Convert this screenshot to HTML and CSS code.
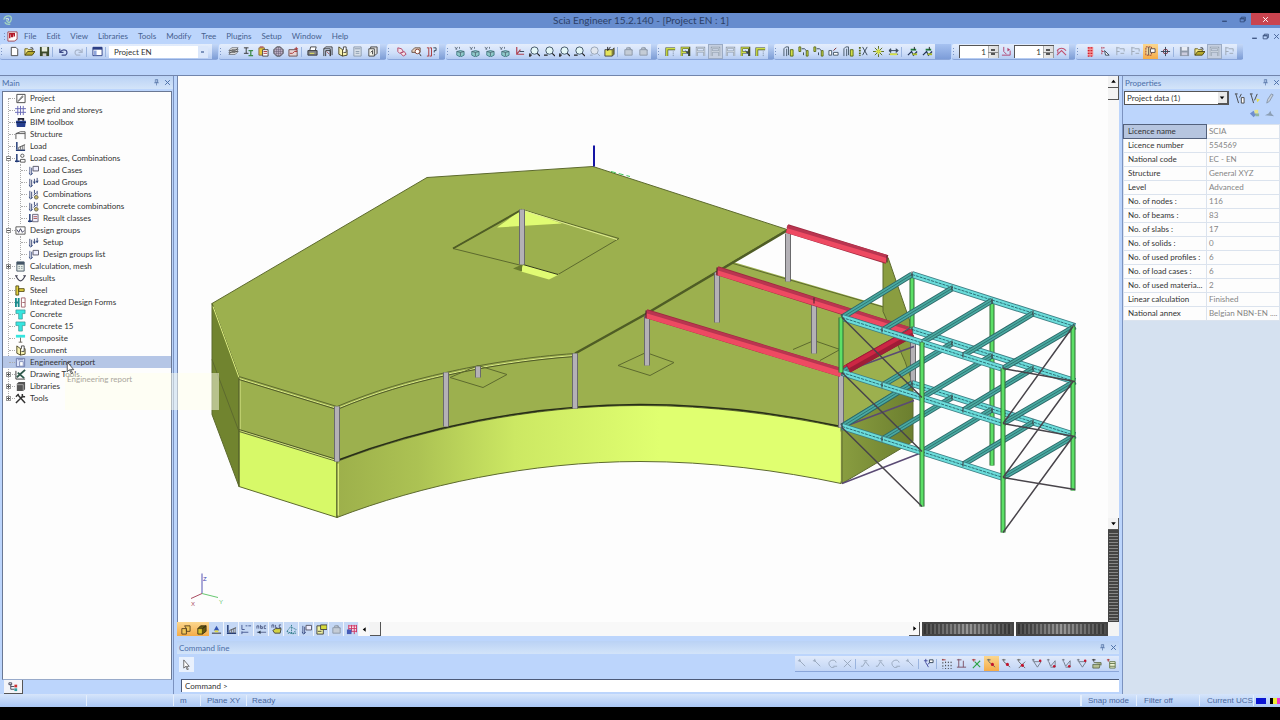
FILE: index.html
```html
<!DOCTYPE html>
<html lang="en">
<head>
<meta charset="utf-8">
<title>Scia Engineer 15.2.140 - [Project EN : 1]</title>
<link rel="stylesheet" href="styles.css">
</head>
<body>
<svg class="defs" aria-hidden="true">
  <symbol id="new" viewBox="0 0 12 12"><path d="M2.5 1.5h5l2 2v7h-7z" fill="#fff" stroke="#444"/></symbol>
  <symbol id="open" viewBox="0 0 12 12"><path d="M1 10V3h3l1 1h4v2" fill="#f5e98a" stroke="#6b6320"/><path d="M1 10l3-4h8l-3 4z" fill="#b5a829" stroke="#4d4818"/><path d="M7 2q3-1 3 2" fill="none" stroke="#333"/></symbol>
  <symbol id="save" viewBox="0 0 12 12"><path d="M1 1h10v10H1z" fill="#3c4a2a"/><path d="M3 1h6v5H3z" fill="#e8eddf"/><path d="M4 8h4v3H4z" fill="#ccc"/></symbol>
  <symbol id="saveg" viewBox="0 0 12 12"><path d="M1 1h10v10H1z" fill="#8e98a8"/><path d="M3 1h6v4H3z" fill="#e8edf5"/><path d="M3 7h6v3H3z" fill="#ccd"/></symbol>
  <symbol id="undo" viewBox="0 0 12 12"><path d="M2 3v4h4M2 7q3-4 7-2 2 3-1 5H4" fill="none" stroke="#3d4a88" stroke-width="1.3"/></symbol>
  <symbol id="redo" viewBox="0 0 12 12"><path d="M10 3v4H6M10 7q-3-4-7-2-2 3 1 5h4" fill="none" stroke="#a9b6cc" stroke-width="1.3"/></symbol>
  <symbol id="win" viewBox="0 0 12 12"><path d="M1 1.500h10v9H1z" fill="#fff" stroke="#2c3f86"/><path d="M1 1h10v3H1z" fill="#2c3f86"/><path d="M2 5h3v5H2z" fill="#8fa5dc"/></symbol>
  <symbol id="layers" viewBox="0 0 12 12"><path d="M1 9l3-3h7l-3 3zM1 7l3-3h7L8 7zM1 5l3-3h7L8 5z" fill="#fff" stroke="#444" stroke-width=".8"/></symbol>
  <symbol id="ibeam" viewBox="0 0 12 12"><path d="M1 2h5M3.500 2v6M1 8h5" stroke="#333" fill="none"/><path d="M6 5h5M8.500 5v5M6 10.500h5" stroke="#3f8a4a" stroke-width="1.400" fill="none"/></symbol>
  <symbol id="paste" viewBox="0 0 12 12"><path d="M1 2h6v8H1z" fill="#e4c838" stroke="#864"/><path d="M5 4h6v7H5z" fill="#fff" stroke="#444"/><path d="M6 6h4M6 8h4M2 1h4" stroke="#a33"/></symbol>
  <symbol id="mesh" viewBox="0 0 12 12"><path d="M4 1h4l3 3v4l-3 3H4L1 8V4z" fill="#c9bcd0" stroke="#333"/><path d="M4 1v10M6 1v10M8 1v10M1 4h10M1 6h10M1 8h10" stroke="#635a70" stroke-width=".6"/></symbol>
  <symbol id="picred" viewBox="0 0 12 12"><path d="M1 4h9v7H1z" fill="#e7d3d3" stroke="#6a5050"/><path d="M2 8h3l2-2h3M9 1v4M7 3h4" stroke="#a33" fill="none"/></symbol>
  <symbol id="print" viewBox="0 0 12 12"><path d="M3 5l1-4h6L9 5" fill="#fff" stroke="#444"/><path d="M1 5h10v5H1z" fill="#85858a" stroke="#333"/><path d="M3 8h5" stroke="#ee5"/></symbol>
  <symbol id="gate" viewBox="0 0 12 12"><path d="M2 11V3l2-2h7v9M4 11V5h5v6M2 3h7v8" fill="none" stroke="#333"/><path d="M5 6l3 3" stroke="#a55"/></symbol>
  <symbol id="book" viewBox="0 0 12 12"><path d="M6 4L2 1v8l4 2 5-1V4zV11" fill="#f7f2b0" stroke="#4b4520"/><path d="M7 4V1h3v6H7" fill="#fff" stroke="#444"/></symbol>
  <symbol id="calc" viewBox="0 0 12 12"><path d="M2 1h8v10H2z" fill="#e8efe8" stroke="#456"/><path d="M2 1h8v3H2z" fill="#456"/><path d="M4 6h1M7 6h1M4 8h1M7 8h1" stroke="#456"/></symbol>
  <symbol id="calcg" viewBox="0 0 12 12"><path d="M2 1h8v10H2z" fill="#d8e0e8" stroke="#8b9aae"/><path d="M3 3h6M4 6h4M4 8h4" stroke="#8b9aae"/></symbol>
  <symbol id="pages" viewBox="0 0 12 12"><path d="M4 1h7v7l-2 2H4z" fill="#ddd" stroke="#444"/><path d="M2 3h6v8H2z" fill="#f5f5ec" stroke="#444"/><path d="M4 7l2-2v4" stroke="#444" fill="none"/></symbol>
  <symbol id="lasso" viewBox="0 0 12 12"><path d="M2 2l4 1 2 3-4 2-2-2zM5 8l3 3 3-2-2-3z" fill="#f3e3ea" stroke="#b04468"/></symbol>
  <symbol id="lens" viewBox="0 0 12 12"><path d="M1 5l3-3h6v5H1z" fill="#e2cfbd" stroke="#6b5548"/><circle cx="7" cy="6" r="2.500" fill="#fff" stroke="#843"/><path d="M9 8l2 3" stroke="#333"/></symbol>
  <symbol id="colq" viewBox="0 0 12 12"><path d="M1 2h2v9H1M4 2h2v9H4" fill="none" stroke="#a33"/><path d="M8 2h3v3H9v2M9 9v1" fill="none" stroke="#345"/></symbol>
  <symbol id="cube" viewBox="0 0 12 12"><path d="M3 6l4-1 4 1v4l-4 2-4-2z" fill="#8fc9c9" stroke="#2d6b73" stroke-width=".8"/><path d="M3 6l4 1v4M7 7l4-1M1 1l2 3M4 1L2 4M6 1v2" fill="none" stroke="#456" stroke-width=".8"/></symbol>
  <symbol id="axis" viewBox="0 0 12 12"><path d="M3 1v8h8M3 9l4-5" stroke="#b04050" fill="none" stroke-width="1.300"/><path d="M6 6h5" stroke="#345"/></symbol>
  <symbol id="zin" viewBox="0 0 12 12"><circle cx="6" cy="5" r="4" fill="#e4f7f7" stroke="#3b5060"/><path d="M9 8l3 3M1 8v4M0 10h3" stroke="#222" stroke-width="1.300"/></symbol>
  <symbol id="zout" viewBox="0 0 12 12"><circle cx="6" cy="5" r="4" fill="#e4f7f7" stroke="#3b5060"/><path d="M9 8l3 3M0 10h4" stroke="#222" stroke-width="1.300"/></symbol>
  <symbol id="zg" viewBox="0 0 12 12"><circle cx="6" cy="5" r="4" fill="#e0e6ee" stroke="#95a2b4"/><path d="M9 8l3 3M1 10h3" stroke="#95a2b4"/></symbol>
  <symbol id="box" viewBox="0 0 12 12"><path d="M1 4h8v7H1z" fill="#e4e35c" stroke="#444"/><path d="M9 4l2-2v7l-2 2" fill="#8a8a28" stroke="#444"/><path d="M4 1v4M7 1L4 5" stroke="#222"/></symbol>
  <symbol id="handg" viewBox="0 0 12 12"><path d="M2 4h8v6H2zM4 4V2h4v2M6 1l4 4" fill="#c4ccd6" stroke="#8c98a8"/></symbol>
  <symbol id="frame" viewBox="0 0 12 12"><path d="M2 11V3h9" fill="none" stroke="#404a28" stroke-width="3"/><path d="M2 11V3h9" fill="none" stroke="#cfdf45" stroke-width="1.600"/><path d="M9 6v5" stroke="#789" stroke-dasharray="1 1"/></symbol>
  <symbol id="frame2" viewBox="0 0 12 12"><path d="M2 11V2h8v9M2 7h8" fill="none" stroke="#404a28" stroke-width="2.400"/><path d="M2 11V2h8M2 7h5" fill="none" stroke="#d2e048" stroke-width="1.400"/><path d="M6 5l4 5" stroke="#347"/></symbol>
  <symbol id="frameg" viewBox="0 0 12 12"><path d="M2 11V2h8v9M2 6h8" fill="none" stroke="#8c99a9" stroke-width="2.200"/><path d="M2 11V2h8v9M2 6h8" fill="none" stroke="#dbe3ec" stroke-width=".8"/></symbol>
  <symbol id="cols" viewBox="0 0 12 12"><path d="M1 11V3l2-2h3v9M4 3v8" fill="none" stroke="#456"/><path d="M8 4h3v7H8z" fill="#d5e047" stroke="#56681b"/></symbol>
  <symbol id="move" viewBox="0 0 12 12"><path d="M1 1h2v5H1z" fill="#d5e047" stroke="#56681b"/><path d="M9 5h2v6H9z" fill="#d5e047" stroke="#56681b"/><path d="M4 3h3l2 2M6 7v3" stroke="#345" fill="none"/></symbol>
  <symbol id="scale" viewBox="0 0 12 12"><path d="M1 5h3v5H1zM6 7h5v3H6z" fill="#fff" stroke="#456"/><path d="M6 5l3-3" stroke="#722"/></symbol>
  <symbol id="scis" viewBox="0 0 12 12"><path d="M2 1v10" stroke="#56681b" stroke-width="2" stroke-dasharray="2 1"/><path d="M5 1l5 9M10 1L5 10" stroke="#345"/></symbol>
  <symbol id="star" viewBox="0 0 12 12"><path d="M6 0v12M0 6h12M2 2l8 8M10 2l-8 8" stroke="#56681b"/><path d="M6 3v6M3 6h6" stroke="#d5e047" stroke-width="2"/></symbol>
  <symbol id="stretch" viewBox="0 0 12 12"><path d="M1 9h10M3 5h6M1 5l2-2v4zM11 5L9 3v4z" stroke="#345" fill="#345"/><path d="M2 8h8v2H2z" fill="#d5e047"/></symbol>
  <symbol id="tools2" viewBox="0 0 12 12"><path d="M1 10l4-4 2 4 4-4" stroke="#235" fill="none" stroke-width="1.300"/><path d="M4 4h6" stroke="#237a3a" stroke-width="2"/><path d="M6 9h5" stroke="#aaba28" stroke-width="2"/><path d="M8 1v3" stroke="#222"/></symbol>
  <symbol id="wave" viewBox="0 0 12 12"><path d="M1 5q5-5 10 0M1 10l5-5 5 5M2 4v4" stroke="#c05070" fill="none" stroke-width="1.100"/></symbol>
  <symbol id="loadm" viewBox="0 0 12 12"><path d="M1 10h9V5M3 1v5l3 3" stroke="#b0406c" fill="none"/><path d="M7 2v4l3-2z" fill="#b0406c"/></symbol>
  <symbol id="bug" viewBox="0 0 12 12"><path d="M3 1h6v10H3z" fill="#f59696"/><path d="M3 2h6M3 5h6M3 8h6M3 11h6" stroke="#cf1f30" stroke-width="1.500" stroke-dasharray="2 1"/></symbol>
  <symbol id="rcur" viewBox="0 0 12 12"><path d="M2 1v9M5 2H2M2 6h3" stroke="#b03048" stroke-dasharray="2 1"/><path d="M5 5l5 5H6z" fill="#fff" stroke="#345"/></symbol>
  <symbol id="curg" viewBox="0 0 12 12"><path d="M2 1v9M5 2H2M2 6h3" stroke="#9ba6b4"/><path d="M5 3h5v3M6 8h4" stroke="#9ba6b4" fill="none"/></symbol>
  <symbol id="sel" viewBox="0 0 12 12"><path d="M1 1h6v9H1z" fill="#ecd9a0" stroke="#9a3328" stroke-dasharray="2 1"/><path d="M6 3h5v4H6zM4 1v9" fill="#fff" stroke="#5a4a48"/></symbol>
  <symbol id="target" viewBox="0 0 12 12"><circle cx="6" cy="6" r="2.500" fill="none" stroke="#8a3440"/><path d="M6 1v10M1 6h10" stroke="#345"/></symbol>
  <symbol id="project" viewBox="0 0 12 12"><path d="M2 1.500h9v9H2z" fill="#fff" stroke="#444"/><path d="M3 9l5-6 1 1-5 5z" fill="#999" stroke="#555" stroke-width=".6"/></symbol>
  <symbol id="grid" viewBox="0 0 12 12"><path d="M3 1v10M6 1v10M9 1v10M0 4h12M0 8h12" stroke="#6465b4"/></symbol>
  <symbol id="bim" viewBox="0 0 12 12"><path d="M1 4h11l-1 7H2z" fill="#243d8d"/><path d="M4 4V2h5v2" fill="none" stroke="#223" stroke-width="2"/><path d="M1 6h11" stroke="#112558"/></symbol>
  <symbol id="struct" viewBox="0 0 12 12"><path d="M1 11V5q5-3 10-2v8M1 5h10" fill="none" stroke="#555"/></symbol>
  <symbol id="load" viewBox="0 0 12 12"><path d="M2 1v8M1 10h10" stroke="#223a76" stroke-width="1.600"/><path d="M4 10V7M6 10V6M8 10V5M10 10V4" stroke="#777"/><path d="M4 7l7-3" stroke="#555"/></symbol>
  <symbol id="lcase" viewBox="0 0 12 12"><path d="M2 1v9M0 9h5" stroke="#223a76" stroke-width="1.600"/><circle cx="8" cy="3" r="1.800" fill="none" stroke="#555"/><path d="M6 7h5v3H6z" fill="none" stroke="#555"/></symbol>
  <symbol id="rclass" viewBox="0 0 12 12"><path d="M2 1v9M0 9h5" stroke="#223a76" stroke-width="1.600"/><path d="M5 1.500h6v8H5z" fill="#eef" stroke="#667"/><path d="M6 4h4M6 6h4" stroke="#a55"/></symbol>
  <symbol id="lc" viewBox="0 0 12 12"><path d="M2 2v8M4 3v7" stroke="#455487"/><path d="M5.500 1.500h6v5h-6z" fill="#eef" stroke="#556"/><path d="M1 9l2 2 2-2" fill="none" stroke="#223a76"/></symbol>
  <symbol id="lg" viewBox="0 0 12 12"><path d="M2 2v8M4 3v7M7 2v5M10 1v5" stroke="#354373"/><path d="M1 9l2 2 2-2M6 5l1 2 1-2M9 4l1 2 1-2" fill="none" stroke="#223a76"/></symbol>
  <symbol id="comb" viewBox="0 0 12 12"><path d="M2 2v8M4 3v7M7 1v4M10 2v4" stroke="#354373"/><path d="M1 9l2 2 2-2M6 7l3-3" fill="none" stroke="#223a76"/><circle cx="9" cy="9" r="2" fill="#c9b968" stroke="#665"/></symbol>
  <symbol id="dg" viewBox="0 0 12 12"><path d="M1 2h10v8H1z" fill="#fff" stroke="#555"/><path d="M2 5l2 3 2-4 2 4 2-2" fill="none" stroke="#335"/></symbol>
  <symbol id="results" viewBox="0 0 12 12"><path d="M1 3q5 11 10 0M0 3h3M9 3h3" fill="none" stroke="#445" stroke-width="1.300"/></symbol>
  <symbol id="steel" viewBox="0 0 12 12"><path d="M1 1h3v10H1zM4 4h6v3H4z" fill="#e3d23f" stroke="#554e18"/></symbol>
  <symbol id="idf" viewBox="0 0 12 12"><path d="M1 1v10M4 1v10M1 6h3" stroke="#178b8c" stroke-width="2"/><path d="M7 1h4v10H7zM8 6h3" fill="#fff" stroke="#a0606a"/></symbol>
  <symbol id="concrete" viewBox="0 0 12 12"><path d="M1 1h10v4H8v6H4V5H1z" fill="#36e5df" stroke="#318b8a" stroke-width=".7"/></symbol>
  <symbol id="compo" viewBox="0 0 12 12"><path d="M1 2h10v3H1z" fill="#36e5df"/><path d="M6 5v5M4 10h4" stroke="#68635a"/></symbol>
  <symbol id="report" viewBox="0 0 12 12"><path d="M1.500 1.500h9v9h-9z" fill="#dde5fa" stroke="#6876a8"/><path d="M5 5h4v5H5z" fill="#fff" stroke="#7f8cba"/><path d="M3 3h6" stroke="#6876a8"/></symbol>
  <symbol id="draw" viewBox="0 0 12 12"><path d="M1 2v9h10" stroke="#333" fill="none"/><path d="M2 9l9-8M3 4l7 6" stroke="#30594c" stroke-width="2"/></symbol>
  <symbol id="libs" viewBox="0 0 12 12"><path d="M2 3l2-2h7v8l-2 2H2z" fill="#555"/><path d="M2 4h7M9 4v7" stroke="#aaa"/></symbol>
  <symbol id="hammer" viewBox="0 0 12 12"><path d="M1 11l8-8M3 2l8 9" stroke="#333" stroke-width="1.600"/><path d="M1 4l3-3M8 1v3h3" stroke="#333" fill="none" stroke-width="1.600"/></symbol>
  <symbol id="cubey" viewBox="0 0 12 12"><path d="M2 5h5v6H2zM5 2h6v6H7V5z" fill="#f1c65a" stroke="#5c4521"/></symbol>
  <symbol id="cubed" viewBox="0 0 12 12"><path d="M2 5h5v6H2z" fill="#d6c32c" stroke="#3c3212"/><path d="M2 5l3-3h6L7 5M7 5l4-3v6l-4 3" fill="#655811" stroke="#3c3212"/></symbol>
  <symbol id="sup" viewBox="0 0 12 12"><path d="M6 2l3 5H3z" fill="#3556b0"/><path d="M1 10h10" stroke="#223"/><path d="M4 7h4v2H4z" fill="#e3dc45"/></symbol>
  <symbol id="lxx" viewBox="0 0 12 12"><path d="M1 1v5h3M5 2h2M8 2h3M1 9h7M1 8v3" stroke="#44578e" fill="none"/></symbol>
  <symbol id="abc" viewBox="0 0 12 12"><path d="M1 5V2h2v3M5 1v4h2V3H5M11 2H9v3h2M1 9h10" stroke="#35406c" fill="none" stroke-width=".8"/><path d="M5 7v4l-3-2z" fill="#234"/></symbol>
  <symbol id="abcy" viewBox="0 0 12 12"><path d="M1 4V1h2v3M5 1v3h2M11 1H9v3h2" stroke="#35406c" fill="none" stroke-width=".8"/><path d="M2 7l3-2h6l-1 5H4z" fill="#d3d243" stroke="#444"/></symbol>
  <symbol id="dotted" viewBox="0 0 12 12"><path d="M1 8l4-5 6 3-3 5z" fill="none" stroke="#2b7886" stroke-dasharray="1.500 1"/><path d="M6 1v9M2 10h9" stroke="#2b7886" stroke-dasharray="1.500 1"/></symbol>
  <symbol id="winy" viewBox="0 0 12 12"><path d="M1 2h7v9H1z" fill="#eef0a0" stroke="#444"/><path d="M5 1h7v5H5z" fill="#d6da3c" stroke="#444"/><path d="M2 8h4" stroke="#444"/></symbol>
  <symbol id="rgrid" viewBox="0 0 12 12"><path d="M3 1h9v8H3z" fill="#fbe1ea"/><path d="M3 1v8M6 1v8M9 1v10M11.500 1v8M3 2h9M3 5h9M3 8h9" stroke="#c93564"/><path d="M1 6h5v5H1z" fill="#455bb7"/></symbol>
  <symbol id="tree" viewBox="0 0 12 12"><path d="M1 2h3v2H1zM3 4v5h4M3 6h4" fill="none" stroke="#445"/><path d="M7 4h3v3H7z" fill="#c33"/><path d="M7 8h3v3H7z" fill="#2a9fa0"/></symbol>
  <symbol id="cursor" viewBox="0 0 12 12"><path d="M3 1v9l2-2 2 4 1-1-2-3h3z" fill="#fff" stroke="#444" stroke-width=".8"/></symbol>
  <symbol id="sn1" viewBox="0 0 12 12"><path d="M3 3l6 6M1 3h3M3 1v3" stroke="#97a6bb"/></symbol>
  <symbol id="sn2" viewBox="0 0 12 12"><path d="M10 5a4 4 0 1 0-2 5M7 9h4" fill="none" stroke="#97a6bb"/></symbol>
  <symbol id="sn3" viewBox="0 0 12 12"><path d="M2 2l8 8M10 2l-8 8" stroke="#97a6bb"/></symbol>
  <symbol id="sn4" viewBox="0 0 12 12"><path d="M1 9h2l3-5 4 5M4 3h4" fill="none" stroke="#97a6bb"/></symbol>
  <symbol id="sx" viewBox="0 0 12 12"><path d="M1 3h4M3 1v4M3 5l3 5M10 3l-5 4" stroke="#434a9c" fill="none"/><path d="M7 2h4v3H7z" fill="#fff" stroke="#345"/></symbol>
  <symbol id="sdots" viewBox="0 0 12 12"><path d="M2 1v11M5 4v8M8 4v8M11 4v8" stroke="#333" stroke-dasharray="1.500 2"/><path d="M1 2h4" stroke="#a33"/></symbol>
  <symbol id="sline" viewBox="0 0 12 12"><path d="M1 2h5M3 1v9M1 10h10M8 3v7" stroke="#7c5064" fill="none"/></symbol>
  <symbol id="sgreen" viewBox="0 0 12 12"><path d="M1 2h4M3 1v3" stroke="#a33"/><path d="M2 11l8-8M4 4l6 6" stroke="#2da244" stroke-width="1.200"/></symbol>
  <symbol id="sred" viewBox="0 0 12 12"><path d="M1 2h4M3 1v3M3 4l7 6" stroke="#666"/><circle cx="7" cy="7" r="1.700" fill="#c3142d"/></symbol>
  <symbol id="scross" viewBox="0 0 12 12"><path d="M1 2h4M3 1v3M3 4l7 7M10 4l-7 7" stroke="#666"/><circle cx="7" cy="8" r="1.700" fill="#c3142d"/></symbol>
  <symbol id="spath" viewBox="0 0 12 12"><path d="M1 2h3M2.500 1v3M3 4l2 5 5-6v7H5" fill="none" stroke="#68707e" stroke-width=".9"/><circle cx="9" cy="9" r="1.400" fill="#c3142d"/></symbol>
  <symbol id="sangle" viewBox="0 0 12 12"><path d="M1 2h3M2.500 1v3M3 4l4 6 4-6z" fill="none" stroke="#68707e" stroke-width=".9"/><circle cx="10" cy="3" r="1.400" fill="#c3142d"/></symbol>
  <symbol id="sfold" viewBox="0 0 12 12"><path d="M1 2h4M3 1v3" stroke="#333"/><path d="M2 7h8l-1 4H2zM3 5h8v3" fill="#b4bf92" stroke="#4e5a3a" stroke-width=".8"/></symbol>
  <symbol id="slist" viewBox="0 0 12 12"><path d="M1 2h3M2.500 1v3" stroke="#a33"/><path d="M4 4h6v7H4zM4 6h6M4 9h6" fill="#eef3d5" stroke="#66784c"/></symbol>
  <symbol id="filt" viewBox="0 0 12 12"><path d="M1 1h3M2 1l3 10M8 1L6 5" fill="none" stroke="#444"/><path d="M8 5h3v6H8z" fill="#fff" stroke="#444"/></symbol>
  <symbol id="filt2" viewBox="0 0 12 12"><path d="M1 1h3M2 1l3 10M9 1L6 8" fill="none" stroke="#444"/><path d="M8 6l4 1-3 3z" fill="#e7df50"/></symbol>
  <symbol id="pen" viewBox="0 0 12 12"><path d="M3 11l1-4 4-6 2 1-4 7z" fill="#c6cfda" stroke="#8896a8"/></symbol>
  <symbol id="ball" viewBox="0 0 12 12"><path d="M1 6l4-3 3 4-3 3z" fill="#6f8ed0"/><path d="M6 2h4v4H6z" fill="#e5e38a"/><path d="M7 6h4v3H7z" fill="#93b59c"/></symbol>
  <symbol id="plane" viewBox="0 0 12 12"><path d="M1 8l4-2 2-3 1 3 3 3z" fill="#8c9fb5"/></symbol>
  <symbol id="pin" viewBox="0 0 12 12"><path d="M4 1h4v5H4zM2 6.500h8M6 7v4M7 1v5" fill="none" stroke="#5775a8" stroke-width="1.200"/></symbol>
  <symbol id="x" viewBox="0 0 12 12"><path d="M2 2l8 8M10 2l-8 8" stroke="currentColor" stroke-width="1.700"/></symbol>
  <symbol id="min" viewBox="0 0 12 12"><path d="M2 9h8" stroke="#2c4370" stroke-width="2"/></symbol>
  <symbol id="rest" viewBox="0 0 12 12"><path d="M2 4h7v6H2zM4 4V2h7v6H9M2 5h7" fill="none" stroke="#2c4370" stroke-width="1.300"/></symbol>
  <symbol id="logo" viewBox="0 0 12 12"><path d="M2 5q1-4 5-4t3 4-3 3-2-3M3 8q2 3 6 2" fill="none" stroke="#a4d5c0" stroke-width="1.500"/><path d="M4 4h3v2" fill="none" stroke="#e9f5f0"/></symbol>
  <symbol id="app" viewBox="0 0 12 12"><path d="M1 1h10v8l-3 2H1z" fill="#fff" stroke="#a04048"/><path d="M3 8V3h2v3h1V3h2v3" fill="none" stroke="#b3182a" stroke-width="1.500"/></symbol>
  <symbol id="left" viewBox="0 0 12 12"><path d="M8 2v8L3 6z" fill="#000"/></symbol>
  <symbol id="right" viewBox="0 0 12 12"><path d="M4 2v8l5-4z" fill="#000"/></symbol>
  <symbol id="up" viewBox="0 0 12 12"><path d="M2 8h8L6 3z" fill="#000"/></symbol>
  <symbol id="down" viewBox="0 0 12 12"><path d="M2 4h8L6 9z" fill="#000"/></symbol>
</svg>

<header class="titlebar">
  <svg class="ic logo"><use href="#logo"/></svg>
  <h1>Scia Engineer 15.2.140 - [Project EN : 1]</h1>
  <div class="winctl">
    <button aria-label="Minimize"><svg class="ic s"><use href="#min"/></svg></button>
    <button aria-label="Restore"><svg class="ic s"><use href="#rest"/></svg></button>
    <button class="close" aria-label="Close"><svg class="ic s"><use href="#x"/></svg></button>
  </div>
</header>

<nav class="menubar" aria-label="Menu">
  <i class="grip"></i>
  <svg class="ic app"><use href="#app"/></svg>
  <button>File</button><button>Edit</button><button>View</button><button>Libraries</button><button>Tools</button><button>Modify</button><button>Tree</button><button>Plugins</button><button>Setup</button><button>Window</button><button>Help</button>
  <div class="docctl">
    <button aria-label="Minimize document"><svg class="ic s"><use href="#min"/></svg></button>
    <button aria-label="Restore document"><svg class="ic s"><use href="#rest"/></svg></button>
    <button aria-label="Close document"><svg class="ic s"><use href="#x"/></svg></button>
  </div>
</nav>

<div class="toolbars">
  <div class="bar"><i class="grip"></i>
    <button aria-label="New"><svg class="ic"><use href="#new"/></svg></button><button aria-label="Open"><svg class="ic"><use href="#open"/></svg></button><button aria-label="Save"><svg class="ic"><use href="#save"/></svg></button><i class="sep"></i>
    <button aria-label="Undo"><svg class="ic"><use href="#undo"/></svg></button><button aria-label="Redo"><svg class="ic"><use href="#redo"/></svg></button><i class="sep"></i>
    <button aria-label="Windows"><svg class="ic"><use href="#win"/></svg></button><i class="sep"></i>
    <select class="projects" aria-label="Active project"><option>Project EN</option></select>
    <i class="more"></i></div>
  <div class="bar"><i class="grip"></i>
    <button aria-label="Layers"><svg class="ic"><use href="#layers"/></svg></button><button aria-label="Cross-sections"><svg class="ic"><use href="#ibeam"/></svg></button><button aria-label="Clipboard"><svg class="ic"><use href="#paste"/></svg></button><button aria-label="Mesh"><svg class="ic"><use href="#mesh"/></svg></button><button aria-label="Pictures"><svg class="ic"><use href="#picred"/></svg></button><i class="sep"></i>
    <button aria-label="Print"><svg class="ic"><use href="#print"/></svg></button><button aria-label="Print picture"><svg class="ic"><use href="#gate"/></svg></button><button aria-label="Document"><svg class="ic"><use href="#book"/></svg></button><button aria-label="Table"><svg class="ic"><use href="#calcg"/></svg></button><button aria-label="Gallery"><svg class="ic"><use href="#pages"/></svg></button>
    <i class="more"></i></div>
  <div class="bar"><i class="grip"></i>
    <button aria-label="Lasso"><svg class="ic"><use href="#lasso"/></svg></button><button aria-label="Search"><svg class="ic"><use href="#lens"/></svg></button><button aria-label="Column query"><svg class="ic"><use href="#colq"/></svg></button>
    <i class="more"></i></div>
  <div class="bar tight"><i class="grip"></i>
    <button aria-label="View X"><svg class="ic"><use href="#cube"/></svg></button><button aria-label="View Y"><svg class="ic"><use href="#cube"/></svg></button><button aria-label="View Z"><svg class="ic"><use href="#cube"/></svg></button><button aria-label="Axonometry"><svg class="ic"><use href="#cube"/></svg></button><button aria-label="Axis"><svg class="ic"><use href="#axis"/></svg></button><button aria-label="Zoom in"><svg class="ic"><use href="#zin"/></svg></button><button aria-label="Zoom out"><svg class="ic"><use href="#zout"/></svg></button><button aria-label="Zoom window"><svg class="ic"><use href="#zin"/></svg></button><button aria-label="Zoom all"><svg class="ic"><use href="#zout"/></svg></button><button aria-label="Zoom selection"><svg class="ic"><use href="#zg"/></svg></button><button aria-label="Clipping box"><svg class="ic"><use href="#box"/></svg></button><i class="sep"></i>
    <button aria-label="Pan back"><svg class="ic"><use href="#handg"/></svg></button><button aria-label="Pan forward"><svg class="ic"><use href="#handg"/></svg></button>
    <i class="more"></i></div>
  <div class="bar tight"><i class="grip"></i>
    <button aria-label="Activity"><svg class="ic"><use href="#frame"/></svg></button><button aria-label="Activity by selection"><svg class="ic"><use href="#frame2"/></svg></button><button aria-label="Activity off"><svg class="ic"><use href="#frameg"/></svg></button><button class="pressed" aria-label="Activity by layer"><svg class="ic"><use href="#frameg"/></svg></button><button aria-label="Activity by plane"><svg class="ic"><use href="#frameg"/></svg></button><button aria-label="Invert activity"><svg class="ic"><use href="#frame2"/></svg></button><button aria-label="Activity all"><svg class="ic"><use href="#frame"/></svg></button>
    <i class="more"></i></div>
  <div class="bar"><i class="grip"></i>
    <button aria-label="Copy"><svg class="ic"><use href="#cols"/></svg></button><button aria-label="Move"><svg class="ic"><use href="#move"/></svg></button><button aria-label="Rotate"><svg class="ic"><use href="#move"/></svg></button><button aria-label="Scale"><svg class="ic"><use href="#scale"/></svg></button><button aria-label="Mirror"><svg class="ic"><use href="#cols"/></svg></button><button aria-label="Trim"><svg class="ic"><use href="#scis"/></svg></button><button aria-label="Break"><svg class="ic"><use href="#star"/></svg></button><button aria-label="Stretch"><svg class="ic"><use href="#stretch"/></svg></button><i class="sep"></i>
    <button aria-label="Connect"><svg class="ic"><use href="#tools2"/></svg></button><button aria-label="Disconnect"><svg class="ic"><use href="#tools2"/></svg></button>
    <i class="more wide"></i></div>
  <div class="bar"><i class="grip"></i>
    <input class="spin" type="number" value="1" aria-label="Load scale"><button aria-label="Load display"><svg class="ic"><use href="#loadm"/></svg></button>
    <input class="spin" type="number" value="1" aria-label="Result scale"><button aria-label="Result display"><svg class="ic"><use href="#wave"/></svg></button>
    <i class="more"></i></div>
  <div class="bar"><i class="grip"></i>
    <button aria-label="Check nodes"><svg class="ic"><use href="#bug"/></svg></button><button aria-label="Select nodes"><svg class="ic"><use href="#rcur"/></svg></button><button aria-label="Select by cut"><svg class="ic"><use href="#curg"/></svg></button><button aria-label="Select previous"><svg class="ic"><use href="#curg"/></svg></button><button class="on" aria-label="Select by window"><svg class="ic"><use href="#sel"/></svg></button><button aria-label="Pick point"><svg class="ic"><use href="#target"/></svg></button><i class="sep"></i>
    <button aria-label="Save selection"><svg class="ic"><use href="#saveg"/></svg></button><button aria-label="Load selection"><svg class="ic"><use href="#open"/></svg></button><button class="pressed" aria-label="Filter on"><svg class="ic"><use href="#frameg"/></svg></button><button aria-label="Filter setup"><svg class="ic"><use href="#curg"/></svg></button>
    <i class="more"></i></div>
</div>

<main class="work">
  <aside class="side">
    <div class="phead"><h2>Main</h2><button aria-label="Pin panel"><svg class="ic s"><use href="#pin"/></svg></button><button aria-label="Close panel"><svg class="ic s"><use href="#x"/></svg></button></div>
    <div class="treebox">
      <ul class="tree">
        <li><svg class="ic"><use href="#project"/></svg>Project</li>
        <li><svg class="ic"><use href="#grid"/></svg>Line grid and storeys</li>
        <li><svg class="ic"><use href="#bim"/></svg>BIM toolbox</li>
        <li><svg class="ic"><use href="#struct"/></svg>Structure</li>
        <li><svg class="ic"><use href="#load"/></svg>Load</li>
        <li class="exp minus"><svg class="ic"><use href="#lcase"/></svg>Load cases, Combinations</li>
        <li class="nest"><ul>
          <li><svg class="ic"><use href="#lc"/></svg>Load Cases</li>
          <li><svg class="ic"><use href="#lg"/></svg>Load Groups</li>
          <li><svg class="ic"><use href="#comb"/></svg>Combinations</li>
          <li><svg class="ic"><use href="#comb"/></svg>Concrete combinations</li>
          <li><svg class="ic"><use href="#rclass"/></svg>Result classes</li>
        </ul></li>
        <li class="exp minus"><svg class="ic"><use href="#dg"/></svg>Design groups</li>
        <li class="nest"><ul>
          <li><svg class="ic"><use href="#lg"/></svg>Setup</li>
          <li><svg class="ic"><use href="#lc"/></svg>Design groups list</li>
        </ul></li>
        <li class="exp plus"><svg class="ic"><use href="#calc"/></svg>Calculation, mesh</li>
        <li><svg class="ic"><use href="#results"/></svg>Results</li>
        <li><svg class="ic"><use href="#steel"/></svg>Steel</li>
        <li><svg class="ic"><use href="#idf"/></svg>Integrated Design Forms</li>
        <li><svg class="ic"><use href="#concrete"/></svg>Concrete</li>
        <li><svg class="ic"><use href="#concrete"/></svg>Concrete 15</li>
        <li><svg class="ic"><use href="#compo"/></svg>Composite</li>
        <li><svg class="ic"><use href="#book"/></svg>Document</li>
        <li class="current"><svg class="ic"><use href="#report"/></svg>Engineering report
          <svg class="ic pointer"><use href="#cursor"/></svg><span class="tip" role="tooltip">Engineering report</span></li>
        <li class="exp plus"><svg class="ic"><use href="#draw"/></svg>Drawing Tools</li>
        <li class="exp plus"><svg class="ic"><use href="#libs"/></svg>Libraries</li>
        <li class="exp plus"><svg class="ic"><use href="#hammer"/></svg>Tools</li>
      </ul>
    </div>
    <button class="tab" aria-label="Tree tab"><svg class="ic"><use href="#tree"/></svg></button>
  </aside>

  <section class="center">
    <div class="view">
      <svg class="model" viewBox="178 77 930 545" role="img" aria-label="3D structural model">
        <defs>
          <linearGradient id="wall" gradientUnits="userSpaceOnUse" x1="337" y1="0" x2="660" y2="0"><stop offset="0" stop-color="#9db04b"/><stop offset=".25" stop-color="#acc253"/><stop offset=".55" stop-color="#cce863"/><stop offset="1" stop-color="#e0ff70"/></linearGradient>
          <linearGradient id="sidew" x1="0" y1="0" x2="1" y2="0"><stop offset="0" stop-color="#899d40"/><stop offset="1" stop-color="#6c7f2f"/></linearGradient>
          <g id="level">
            <path class="cx0" d="M912 275L1075 327"/><path class="cx1" d="M912 275L1075 327"/><path class="cx2" d="M912 275L1075 327"/>
            <path class="cr0" d="M882 331L952 289M922 343L992 301M963 356L1033 314M1003 369L1075 327M842 318L912 275"/><path class="cr1" d="M882 331L952 289M922 343L992 301M963 356L1033 314M1003 369L1075 327M842 318L912 275"/><path class="cr2" d="M882 331L952 289M922 343L992 301M963 356L1033 314M1003 369L1075 327M842 318L912 275"/>
            <path class="cx0" d="M842 318L1003 369"/><path class="cx1" d="M842 318L1003 369"/><path class="cx2" d="M842 318L1003 369"/>
            <path class="joint" d="M882 328v5M922 341v5M963 353v5M1003 366v6M952 286v5M992 299v5M1033 311v5M1074 324v6M912 272v5M842 315v6"/>
          </g>
        </defs>
        <!-- slabs and walls -->
        <path fill="#9cb04e" d="M239 377L300 380L430 350L575 340L735 263L885 307L913 332V392L841 430C780 415 710 406 640 406C530 406 420 430 337 462L239 432Z"/>
        <path class="edge" fill="none" d="M733 264L885 308"/>
        <path fill="#9cb04e" class="edge" d="M427 178L593 167L787 230L645 315L575 354C530 357 480 365 446 373C410 381 375 391 337 407L239 377L212 304Z"/>
        <path fill="#71842f" class="edge" d="M212 304L239 377V487L212 415Z"/><path class="edge" fill="none" d="M212 360L239 432"/>
        <path fill="#d7f968" class="edge" d="M239 432L337 462V518L239 487Z"/>
        <path fill="url(#wall)" class="edge" d="M337 462C420 430 530 406 640 406C710 406 780 415 841 428V484C780 471 710 462 640 462C530 462 420 486 337 518Z"/>
        <path fill="none" stroke="#dbe98a" d="M239 379L337 409C375 393 410 383 446 375S530 359 575 356M240 379V431L337 461"/>
        <path fill="none" stroke="#4e5926" d="M239 380L337 410C375 394 410 384 446 376S530 360 575 357M239 430L337 460"/>
        <path fill="none" stroke="#282e18" stroke-width="1.500" d="M337 461C420 429 530 405 640 405C710 405 780 414 841 427"/>
        <path fill="none" stroke="#4f5d25" stroke-width="2.500" d="M787 231L645 315L575 354"/>
        <path stroke="#d9ec7a" stroke-width="2" d="M338 464V516M841 432V482"/><path stroke="#59642a" d="M337 462V518M239 377V487M842 430V484"/>
        <path stroke="#e1f383" d="M213 307L239 378"/>
        <!-- roof opening -->
        <path fill="#9cb04e" class="edge" d="M522 210L619 239L558 275L453 249Z"/>
        <path fill="#e0fb73" d="M522 210L497 228L562 224ZM523 265L559 275L549 280L521 272Z"/>
        <path fill="#687a2e" d="M522 265L513 269L522 272Z"/><path stroke="#333a1d" d="M523 265L558 275"/>
        <path fill="none" stroke="#e2ee94" d="M523 211L617 240"/><path fill="none" stroke="#4f5d25" stroke-width="2" d="M522 210L453 249"/>
        <!-- footings -->
        <path class="edge" fill="none" d="M618 366L646 353L674 363L650 376ZM450 378L478 366L507 375L483 388ZM793 350L814 341L840 350L820 361"/>
        <!-- right walls -->
        <path fill="#8a9d40" class="edge" d="M883 260L888 258L910 322L913 385L905 362L883 312Z"/>
        <path fill="url(#sidew)" class="edge" d="M842 430L913 386V442L842 484Z"/>
        <!-- concrete columns -->
        <path class="col0" d="M337 407V462M446 373V427M575 354V409M647 316V366M717 273V323M788 234V282M814 304V354M841 374V428M913 338V388M522 210V265M478 367V378"/>
        <path class="col1" d="M337 407V462M446 373V427M575 354V409M647 316V366M717 273V323M788 234V282M814 304V354M841 374V428M913 338V388M522 210V265M478 367V378"/>
        <!-- red beams -->
        <path class="rb0" d="M787 229L887 260M717 271L912 333M646 314L841 373"/><path class="rb1" d="M787 230L887 260M717 272L912 333M646 315L841 374"/><path class="rb2" d="M787 227L887 257M717 269L912 330M646 312L841 370"/>
        <path stroke="#84162b" stroke-width="9" d="M841 373L912 333"/><path stroke="#cc2744" stroke-width="5" d="M841 371L912 331"/>
        <path stroke="#40222a" d="M814 298v6M646 311v8M717 268v8M887 256v7"/>
        <!-- steel frame -->
        <path class="gc0" d="M992 301V466M912 277V330"/><path class="gc1" d="M992 301V466M912 277V330"/>
        <path class="brace p" d="M842 373L914 347M842 428L914 401M842 484L922 453"/>
        <path class="cr0" d="M842 427L912 384"/><path class="cr1" d="M842 427L912 384"/>
        <use href="#level" y="109"/><use href="#level" y="55"/>
        <path stroke="#9f1c36" stroke-width="9" d="M848 369L912 333"/><path stroke="#cc2744" stroke-width="4" d="M848 367L912 331"/>
        <use href="#level"/>
        <path class="gc0" d="M841 318V373M922 343V507M1003 369V533M1073 327V491"/><path class="gc1" d="M841 318V373M922 343V507M1003 369V533M1073 327V491"/>
        <path class="brace" d="M842 318L922 398M842 373L922 452M842 428L922 507M1073 327L1003 424M1073 382L1003 478M1073 437L1003 533M1003 369L1075 382M1003 424L1075 437M1003 478L1075 490"/>
        <!-- origin and axes -->
        <path stroke="#1515a4" stroke-width="2" d="M594 146V167"/><path stroke="#42c75b" stroke-width="1" stroke-dasharray="5 3" d="M611 172L630 177"/>
        <path stroke="#5555b5" d="M202 574V594"/><path stroke="#a94c61" d="M202 594L191 599"/><path stroke="#67c871" d="M202 594L218 598"/>
        <text x="203" y="581" class="ax" fill="#4242b0">Z</text><text x="191" y="606" class="ax" fill="#a94c61">X</text><text x="219" y="604" class="ax" fill="#67c871">Y</text>
      </svg>
      <div class="vbar"><button aria-label="Scroll up"><svg class="ic s"><use href="#up"/></svg></button><i class="thumb"></i><i class="fill"></i><button aria-label="Scroll down"><svg class="ic s"><use href="#down"/></svg></button><i class="wheel"></i></div>
    </div>
    <div class="viewbar">
      <button class="on" aria-label="Render"><svg class="ic"><use href="#cubey"/></svg></button><button class="on" aria-label="Shade"><svg class="ic"><use href="#cubed"/></svg></button>
      <button aria-label="Supports"><svg class="ic"><use href="#sup"/></svg></button><button aria-label="Loads"><svg class="ic"><use href="#load"/></svg></button><button aria-label="Local axes"><svg class="ic"><use href="#lxx"/></svg></button><button aria-label="Labels"><svg class="ic"><use href="#abc"/></svg></button><button aria-label="Label setup"><svg class="ic"><use href="#abcy"/></svg></button><button aria-label="Mesh"><svg class="ic"><use href="#dotted"/></svg></button><button aria-label="Load labels"><svg class="ic"><use href="#lc"/></svg></button><button aria-label="View parameters"><svg class="ic"><use href="#winy"/></svg></button><button aria-label="Last view"><svg class="ic"><use href="#handg"/></svg></button><button aria-label="Grid"><svg class="ic"><use href="#rgrid"/></svg></button>
      <button class="arrow" aria-label="Scroll left"><svg class="ic s"><use href="#left"/></svg></button><i class="hthumb"></i><i class="fill"></i><button class="arrow raised" aria-label="Scroll right"><svg class="ic s"><use href="#right"/></svg></button><i class="hwheel"></i><i class="hwheel"></i><i class="corner"></i>
    </div>
    <div class="phead cmdhead"><h2>Command line</h2><button aria-label="Pin panel"><svg class="ic s"><use href="#pin"/></svg></button><button aria-label="Close panel"><svg class="ic s"><use href="#x"/></svg></button></div>
    <div class="cmdbar">
      <button class="arrowbtn" aria-label="Cursor"><svg class="ic"><use href="#cursor"/></svg></button>
      <div class="snap">
        <button aria-label="Line"><svg class="ic"><use href="#sn1"/></svg></button><button aria-label="Polyline"><svg class="ic"><use href="#sn1"/></svg></button><button aria-label="Arc"><svg class="ic"><use href="#sn2"/></svg></button><button aria-label="Delete"><svg class="ic"><use href="#sn3"/></svg></button><i class="sep"></i>
        <button aria-label="Tangent"><svg class="ic"><use href="#sn4"/></svg></button><button aria-label="Curve"><svg class="ic"><use href="#sn4"/></svg></button><button aria-label="Spline"><svg class="ic"><use href="#sn2"/></svg></button><button aria-label="Extend"><svg class="ic"><use href="#sn1"/></svg></button><i class="sep"></i>
        <button aria-label="Snap setup"><svg class="ic"><use href="#sx"/></svg></button><i class="sep"></i>
        <button aria-label="Dot grid"><svg class="ic"><use href="#sdots"/></svg></button><button aria-label="Line grid"><svg class="ic"><use href="#sline"/></svg></button><button aria-label="Intersections"><svg class="ic"><use href="#sgreen"/></svg></button><button class="on" aria-label="Endpoints"><svg class="ic"><use href="#sred"/></svg></button><button aria-label="Midpoints"><svg class="ic"><use href="#sred"/></svg></button><button aria-label="Nodes"><svg class="ic"><use href="#scross"/></svg></button><button aria-label="Perpendicular"><svg class="ic"><use href="#sangle"/></svg></button><button aria-label="Tangent points"><svg class="ic"><use href="#spath"/></svg></button><button aria-label="Centre"><svg class="ic"><use href="#spath"/></svg></button><button aria-label="Line points"><svg class="ic"><use href="#sangle"/></svg></button><button aria-label="Surface"><svg class="ic"><use href="#sfold"/></svg></button><button aria-label="Snap list"><svg class="ic"><use href="#slist"/></svg></button>
      </div>
    </div>
    <input class="command" type="text" value="Command &gt;" aria-label="Command">
  </section>

  <aside class="props">
    <div class="phead"><h2>Properties</h2><button aria-label="Pin panel"><svg class="ic s"><use href="#pin"/></svg></button><button aria-label="Close panel"><svg class="ic s"><use href="#x"/></svg></button></div>
    <div class="proptop"><div class="pick"><select aria-label="Properties of"><option>Project data (1)</option></select><svg class="dd" viewBox="0 0 10 12"><path d="M2 5h5L4.500 8z" fill="#000"/></svg></div><button aria-label="Filter"><svg class="ic"><use href="#filt"/></svg></button><button aria-label="Filter selection"><svg class="ic"><use href="#filt2"/></svg></button><button aria-label="Edit"><svg class="ic"><use href="#pen"/></svg></button></div>
    <div class="proptop second"><button aria-label="Material"><svg class="ic"><use href="#ball"/></svg></button><button aria-label="Plane"><svg class="ic"><use href="#plane"/></svg></button></div>
    <table>
      <tr class="cur"><th scope="row">Licence name</th><td>SCIA</td></tr>
      <tr><th scope="row">Licence number</th><td>554569</td></tr>
      <tr><th scope="row">National code</th><td>EC - EN</td></tr>
      <tr><th scope="row">Structure</th><td>General XYZ</td></tr>
      <tr><th scope="row">Level</th><td>Advanced</td></tr>
      <tr><th scope="row">No. of nodes :</th><td>116</td></tr>
      <tr><th scope="row">No. of beams :</th><td>83</td></tr>
      <tr><th scope="row">No. of slabs :</th><td>17</td></tr>
      <tr><th scope="row">No. of solids :</th><td>0</td></tr>
      <tr><th scope="row">No. of used profiles :</th><td>6</td></tr>
      <tr><th scope="row">No. of load cases :</th><td>6</td></tr>
      <tr><th scope="row">No. of used materia...</th><td>2</td></tr>
      <tr><th scope="row">Linear calculation</th><td>Finished</td></tr>
      <tr><th scope="row">National annex</th><td>Belgian NBN-EN ....</td></tr>
    </table>
  </aside>
</main>

<footer class="status">
  <span class="blank"></span><span class="blank"></span><span class="unit">m</span><span class="planexy">Plane XY</span><span class="ready">Ready</span>
  <span class="snapm">Snap mode</span><span class="filt">Filter off</span><span class="ucs">Current UCS</span><i class="flag"></i><i class="inks"></i>
</footer>
</body>
</html>
```
FILE: styles.css
```css
* { box-sizing: border-box; }
body {
  margin: 0; min-height: 100vh; padding: 13px 0; background: #000;
  display: flex; flex-direction: column; overflow-x: hidden;
  font: 8px/12px Lato, "Open Sans", sans-serif; color: #333;
}
h1, h2 { margin: 0; font-weight: 400; }
button, input, select { font: inherit; color: inherit; margin: 0; padding: 0; border: 0; background: none; border-radius: 0; appearance: none; }
button { display: flex; align-items: center; justify-content: center; }
.defs { position: absolute; width: 0; height: 0; }
.ic { width: 11px; height: 11px; flex: none; display: block; }
.ic.s { width: 7px; height: 7px; }

.titlebar { display: flex; align-items: center; height: 15px; background: #668cce; color: #2c3f66; }
.titlebar .logo { margin-left: 2px; }
.titlebar h1 { flex: 1; text-align: center; font-size: 10px; line-height: 15px; padding-left: 54px; }
.winctl { display: flex; align-self: stretch; align-items: flex-start; }
.winctl button { width: 18px; height: 12px; }
.winctl .close { width: 29px; background: #c9444f; color: #fff; }

.menubar { display: flex; align-items: center; height: 16px; background: #bcd5fc; color: #46618f; padding-left: 3px; }
.menubar .app { margin: 0 6px 0 0; }
.menubar > button { margin-right: 10px; line-height: 16px; }
.docctl { display: flex; margin-left: auto; gap: 4px; color: #4b679b; }
.grip { width: 7px; height: 9px; flex: none; background: radial-gradient(circle, #7b95c6 1px, transparent 1px) 0 0 / 3px 3px repeat-y; }
.menubar .grip { width: 4px; }

.toolbars { display: flex; background: #bcd5fc; padding-bottom: 15px; border-bottom: 1px solid #7285ac; }
.bar { display: flex; align-items: center; height: 16px; margin-right: 1px; background: linear-gradient(#e4edfc, #cfdff9 60%, #b4cbf2); border-bottom: 1px solid #8aa6da; border-radius: 2px; }
.bar button { width: 15px; height: 15px; flex: none; }
.tight { margin-right: 0; }
.tight .grip { width: 6px; }
.sep { width: 4px; height: 10px; border-left: 1px solid #9ab4df; flex: none; }
.more { width: 6px; height: 15px; background: linear-gradient(#c4d8f8, #7d9dd6); flex: none; }
.more.wide { width: 16px; background: linear-gradient(#a6c2f1, #7c9cd8); }
.bar .on, .snap .on, .viewbar .on { background: linear-gradient(#fbd78f, #f5ac48); }
.pressed { background: #c5cfdf; outline: 1px solid #9babc4; outline-offset: -1px; }
.projects { width: 99px; margin-right: 4px; height: 12px; line-height: 12px; padding-left: 5px; background: linear-gradient(#7c93bd, #7c93bd) right 4px center / 3px 2px no-repeat, linear-gradient(90deg, #fff 89px, #dbe7fb 89px); }
.spin { width: 40px; height: 13px; line-height: 11px; background: linear-gradient(#555, #555) right 4px top 3px / 4px 2px no-repeat, linear-gradient(#555, #555) right 4px bottom 3px / 4px 2px no-repeat, linear-gradient(#888, #888) right 1px center / 10px 1px no-repeat, linear-gradient(90deg, #fff 28px, #777 28px, #e9e9e9 29px, #dedede 38px, #555 39px); border-top: 1px solid #555; border-left: 1px solid #555; text-align: right; padding: 0 13px 1px 0; }
.spin::-webkit-inner-spin-button { appearance: none; margin: 0; }

.work { flex: 1; display: flex; background: #bcd5fc; min-height: 0; }
.phead { display: flex; align-items: center; height: 13px; padding: 0 2px; gap: 4px; background: linear-gradient(#bad2f5, #d3e4f9); color: #4c6fa8; }
.phead h2 { flex: 1; font-size: 8px; line-height: 12px; }

.side { width: 174px; display: flex; flex-direction: column; flex: none; border-right: 1px solid #7b92bf; }
.treebox { flex: 1; margin: 2px 1px 0 2px; background: #fdfdfd; border: 1px solid #6a7894; border-bottom-color: #98aaca; }
.tree, .tree ul { list-style: none; margin: 0; padding: 0; }
.tree { position: relative; }
.tree::before { content: ""; position: absolute; left: 5px; top: 6px; height: 300px; border-left: 1px dotted #aaa; }
.tree li { display: flex; align-items: center; height: 12px; gap: 4px; padding-left: 12px; position: relative; white-space: nowrap; }
.tree li::before { content: ""; position: absolute; left: 6px; width: 6px; border-top: 1px dotted #aaa; }
.tree .nest { display: block; height: auto; padding: 0; }
.tree .nest::before { display: none; }
.tree .nest ul { margin-left: 17px; border-left: 1px dotted #aaa; }
.tree .nest li { padding-left: 7px; }
.tree .nest li::before { left: 0; }
.tree .exp::after { content: ""; position: absolute; left: 3px; width: 5px; height: 5px; outline: 1px solid #999; outline-offset: -1px; background: linear-gradient(#555, #555) center / 3px 1px no-repeat #fff; }
.tree .plus::after { background: linear-gradient(#555, #555) center / 3px 1px no-repeat, linear-gradient(#555, #555) center / 1px 3px no-repeat #fff; }
.tree .current { background: #b5c6e6; z-index: 2; }
.pointer { position: absolute; left: 61px; top: 5px; width: 13px; height: 13px; z-index: 2; }
.tip { position: absolute; left: 62px; top: 17px; width: 154px; height: 37px; background: rgba(255, 255, 235, .5); color: #aaa69c; padding-left: 2px; line-height: 12px; }
.tab { width: 19px; height: 14px; margin-left: 4px; background: #f3f4f8; border-right: 1px solid #555; border-bottom: 1px solid #555; }

.center { flex: 1; min-width: 0; display: flex; flex-direction: column; margin: 0 3px; }
.view { flex: 1; display: flex; background: #fdfdfd; border-left: 1px solid #7285ac; min-height: 0; }
.model { flex: 1; min-width: 0; min-height: 0; }
.vbar { width: 11px; display: flex; flex-direction: column; background: #fafafa; }
.vbar button, .thumb, .hthumb, .raised { background: #f3f3f3; border-right: 1px solid #555; border-bottom: 1px solid #555; }
.vbar button { height: 12px; width: 11px; }
.thumb { height: 12px; }
.fill { flex: 1; background: #f8f8f8; }
.wheel { height: 92px; border: 1px solid #444; background: repeating-linear-gradient(#444 0 2px, #888 2px 3px); }
.viewbar { display: flex; height: 14px; background: #f8f8f8; }
.viewbar button { width: 15px; background: #c5d8f5; border-right: 1px solid #f1f5fc; }
.viewbar button.on { width: 16px; border: 0; }
.viewbar .arrow { width: 11px; background: #f8f8f8; }
.viewbar .raised { border-right-color: #555; }
.viewbar .hthumb { width: 11px; }
.viewbar .ic { width: 11px; }
.hwheel { width: 92px; margin-left: 2px; border: 2px solid #444; background: linear-gradient(90deg, rgba(0,0,0,.5), rgba(0,0,0,0) 50%, rgba(0,0,0,.5)), repeating-linear-gradient(90deg, #666 0 2px, #999 2px 4px); }
.corner { width: 11px; background: #f4f4f4; }
.cmdhead { margin-top: 5px; }
.cmdbar { display: flex; justify-content: space-between; align-items: center; height: 18px; padding-left: 2px; margin-top: 1px; }
.arrowbtn { width: 15px; height: 15px; background: #e9f1fd; }
.snap { display: flex; align-items: center; height: 16px; background: linear-gradient(#e0eafb, #c2d5f5); border-bottom: 1px solid #8aa6da; }
.snap button { width: 15px; height: 15px; flex: none; }
.snap .sep { width: 3px; }
.command { margin: 6px 0 2px 4px; height: 13px; line-height: 12px; background: #fff; border-top: 1px solid #4c5a78; border-left: 1px solid #4c5a78; padding-left: 3px; flex: none; }

.props { width: 158px; flex: none; background: #d5e1f0; border-left: 1px solid #7b92bf; }
.props .phead { padding-right: 0; }
.proptop { display: flex; align-items: center; height: 18px; background: #bcd5fc; padding: 0 3px 0 1px; justify-content: flex-end; }
.proptop button { width: 15px; height: 14px; }
.pick { position: relative; flex: 1; margin-right: 3px; }
.pick select { display: block; width: 100%; height: 14px; border: 1px solid #555; background: #fff; padding-left: 2px; line-height: 12px; }
.dd { position: absolute; right: 1px; top: 1px; width: 10px; height: 12px; background: #e9e9e9; border-right: 1px solid #555; border-bottom: 1px solid #555; pointer-events: none; }
.second { height: 17px; padding-bottom: 4px; }
table { width: 100%; border-collapse: collapse; table-layout: fixed; background: #fdfdfd; }
th, td { height: 14px; padding: 0 2px; font-weight: 400; text-align: left; border: 1px solid #dbe3ee; line-height: 13px; white-space: nowrap; overflow: hidden; }
th { width: 83px; padding: 0 0 0 4px; }
td { color: #858585; }
.cur th { background: #b6c5df; border: 1px solid #53617c; }

.status { display: flex; align-items: center; height: 13px; background: linear-gradient(#d6e5fb, #aac7f4); color: #48669c; font-family: "Liberation Sans", sans-serif; line-height: 11px; }
.status span { border-right: 1px solid #e4eefc; height: 11px; white-space: nowrap; }
.blank { width: 87px; }
.unit { width: 27px; padding-left: 6px; }
.planexy { width: 46px; padding-left: 6px; }
.ready { flex: 1; padding-left: 5px; }
.snapm { width: 56px; padding-left: 6px; border-left: 1px solid #e4eefc; }
.filt { width: 63px; padding-left: 7px; }
.ucs { width: 54px; padding-left: 7px; }
.flag { width: 10px; height: 6px; background: #0a14d2; margin: 0 4px 0 2px; }
.inks { width: 10px; height: 6px; background: linear-gradient(90deg, #000 3px, #ee3 3px 7px, #e3c 7px); }

.edge { stroke: #5d6a2e; stroke-width: 1; }
.cx0 { fill: none; stroke: #3d7e84; stroke-width: 7; }
.cx1 { fill: none; stroke: #6bdcda; stroke-width: 5; }
.cx2 { fill: none; stroke: #2c6f76; stroke-width: 1; stroke-dasharray: 3 1; }
.cr0 { fill: none; stroke: #2d6a6a; stroke-width: 6; }
.cr1 { fill: none; stroke: #4aaaa2; stroke-width: 4; }
.cr2 { fill: none; stroke: #2f7773; stroke-width: 1; }
.joint { stroke: #3a2f33; stroke-width: 1; }
.col0 { fill: none; stroke: #6a6a6c; stroke-width: 6; }
.col1 { fill: none; stroke: #b4b1b6; stroke-width: 4; }
.rb0 { fill: none; stroke: #a02a40; stroke-width: 9; }
.rb1 { fill: none; stroke: #ee4a62; stroke-width: 7; }
.rb2 { fill: none; stroke: #b93550; stroke-width: 3; }
.gc0 { fill: none; stroke: #2d6a35; stroke-width: 5; }
.gc1 { fill: none; stroke: #5ce067; stroke-width: 3; }
.brace { fill: none; stroke: #48444a; stroke-width: 1.5; }
.brace.p { stroke: #5a4a74; }
.ax { font-family: "Liberation Sans", sans-serif; font-size: 6px; }
```
